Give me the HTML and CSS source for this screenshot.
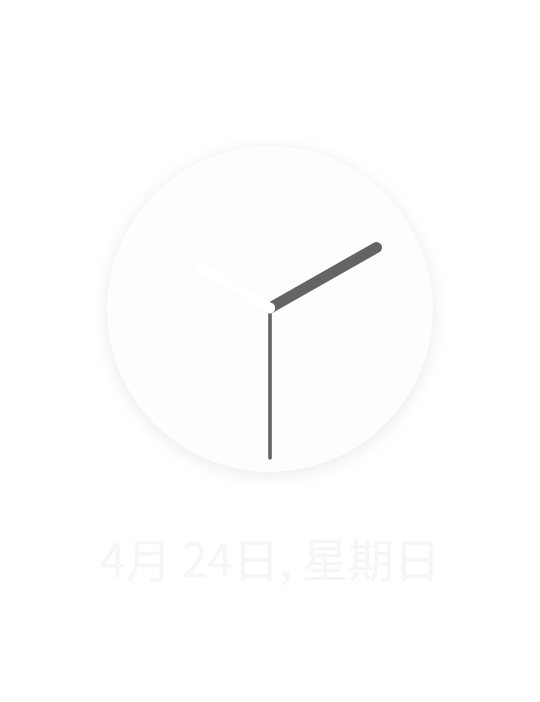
FILE: index.html
```html
<!DOCTYPE html>
<html>
<head>
<meta charset="utf-8">
<link rel="stylesheet" href="styles.css">
</head>
<body>
<main class="screen">
  <div class="clock">
    <svg class="hands" viewBox="0 0 326 326" width="326" height="326">
      <defs>
        <filter id="soft" x="-20%" y="-20%" width="140%" height="140%">
          <feDropShadow dx="0" dy="1" stdDeviation="2" flood-color="#000" flood-opacity="0.012"/>
        </filter>
      </defs>
      <line x1="163" y1="162" x2="163" y2="312" stroke="#646464" stroke-width="3.6" stroke-linecap="round"/>
      <line x1="163" y1="162" x2="269.5" y2="101.5" stroke="#646464" stroke-width="11" stroke-linecap="round"/>
      <line x1="163" y1="162" x2="93" y2="121" stroke="#ffffff" stroke-width="10" stroke-linecap="round" filter="url(#soft)"/>
      <circle cx="162.5" cy="162" r="5.5" fill="#ffffff"/>
    </svg>
  </div>
  <div class="date">4月 24日, 星期日</div>
</main>
</body>
</html>
```

FILE: styles.css
```css
html, body {
  margin: 0;
  padding: 0;
  background: #ffffff;
}

.screen {
  width: 540px;
  height: 702px;
  display: flex;
  flex-direction: column;
  align-items: center;
  padding-top: 146px;
  box-sizing: border-box;
}

.clock {
  width: 326px;
  height: 326px;
  border-radius: 50%;
  background: #fdfdfd;
  box-shadow: 0 3px 18px rgba(0, 0, 0, 0.085);
}

.hands {
  display: block;
}

.date {
  margin-top: 58px;
  font-family: "Noto Sans CJK SC", "Noto Sans", sans-serif;
  font-size: 46px;
  font-weight: 400;
  line-height: 1.2;
  color: #f6f6f6;
  white-space: nowrap;
}
```
